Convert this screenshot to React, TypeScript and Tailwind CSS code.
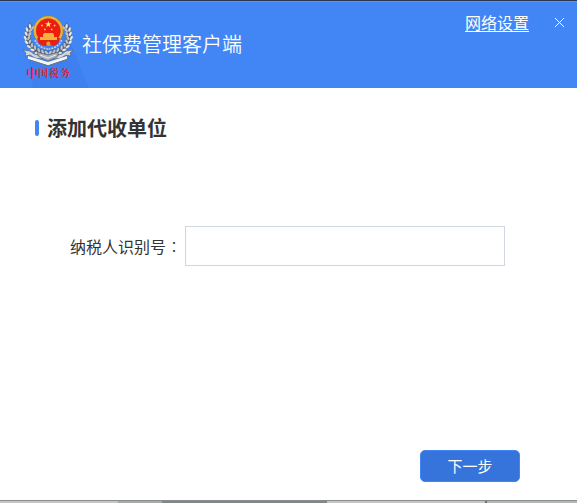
import { useState } from "react";

const fontStack = "font-['Noto_Sans_CJK_SC',sans-serif]";

// wheat ears on the left side, mirrored for the right one
const grains = [
  { x: 10, y: 11, r: 20 },
  { x: 7, y: 14, r: 14 },
  { x: 6, y: 18, r: 6 },
  { x: 5, y: 22, r: 0 },
  { x: 6, y: 26, r: -10 },
  { x: 8, y: 30, r: -25 },
  { x: 11, y: 33, r: -40 },
  { x: 15, y: 36, r: -55 },
  { x: 19, y: 38, r: -65 },
  { x: 23, y: 39, r: -75 },
];

function WheatEar() {
  return (
    <>
      <path
        d="M10 10C3 18 5 28 11 33s9 5 15 6"
        fill="none"
        stroke="#566075"
        strokeWidth="6"
      />
      {grains.map((g) => (
        <g key={g.y} transform={`translate(${g.x} ${g.y}) rotate(${g.r})`}>
          <ellipse cx="-2" cy="0" rx="1.2" ry="2.3" fill="#e4e7e8" transform="rotate(-30)" />
          <ellipse cx="2" cy="0" rx="1.2" ry="2.3" fill="#bcc2c6" transform="rotate(30)" />
        </g>
      ))}
      <path
        d="M13 25c2 5 6 8 13 9"
        fill="none"
        stroke="#c9ced0"
        strokeWidth="1.6"
        strokeDasharray="2 1"
      />
    </>
  );
}

function Emblem() {
  return (
    <svg className="h-[66px] w-[52px] shrink-0" viewBox="0 0 52 66" role="img">
      <WheatEar />
      <g transform="translate(52.6 0) scale(-1 1)">
        <WheatEar />
      </g>

      {/* ribbon ends and the book under the wheat */}
      <path d="M1 35l7 1 4 3 7 2 1 3-7-1-5-3-5 1 1-3z" fill="#d3d7d9" stroke="#4f5b6e" strokeWidth=".6" />
      <path d="M51 35l-7 1-4 3-7 2-1 3 7-1 5-3 5 1-1-3z" fill="#d3d7d9" stroke="#4f5b6e" strokeWidth=".6" />
      <path d="M15 37l11 3 11-3-2 5-9 4-9-4z" fill="#aab1b7" stroke="#4f5b6e" strokeWidth=".6" />
      <path d="M18 40l8 3 8-3" fill="none" stroke="#eceeee" strokeWidth="1" />
      <path d="M6 41l20 6 19-6v3l-18 6h-2L6 44z" fill="#f4f5f5" />
      <path d="M6 44l19 6h2l18-6v1l-18 6h-2L7 45z" fill="#6d7275" />

      {/* national emblem */}
      <circle cx="26.3" cy="15.8" r="15" fill="#b68a2c" />
      <circle cx="26.3" cy="15.8" r="13.4" fill="none" stroke="#dcb548" strokeWidth="2.2" />
      <circle cx="26.3" cy="15.8" r="12.2" fill="#f01c10" />
      <path d="M15 23h23l-2 6-5 2-4-2-4 2-6-2z" fill="#e52014" />
      <path d="M26.3 6l.8 2.3h2.5l-2 1.5.8 2.4-2.1-1.5-2.1 1.5.8-2.4-2-1.5h2.5z" fill="#ffe87a" />
      <g fill="#ffcf55">
        <circle cx="20" cy="10.5" r=".9" />
        <circle cx="32.6" cy="10.5" r=".9" />
        <circle cx="22.9" cy="14.4" r=".9" />
        <circle cx="29.7" cy="14.4" r=".9" />
      </g>
      <path d="M22 18h9l1 2v2h3v3H18v-3h3v-2z" fill="#efb53a" />
      <circle cx="26.3" cy="28.4" r="2" fill="#e0a52c" />

      <g
        fill="#e01c24"
        fontFamily="'Noto Serif CJK SC','Noto Sans CJK SC',serif"
        fontWeight="700"
      >
        <text x="4" y="63" fontSize="12">中</text>
        <text x="16" y="62" fontSize="10">国</text>
        <text x="27" y="62" fontSize="10">税</text>
        <text x="38" y="62" fontSize="10">务</text>
      </g>
    </svg>
  );
}

function Header() {
  return (
    <header className="border-t border-[#263653]">
      <div className="relative flex h-[87px] justify-between border-t border-[#8291ae] bg-[#4285f4] pt-[13px] pl-[22px] text-white">
        <svg className="absolute bottom-0 left-7 h-14 w-16" viewBox="0 0 64 56" aria-hidden="true">
          <path d="M5 56L0 24 38 0l23 56z" fill="#3f80f0" />
        </svg>
        <div className="relative flex">
          <Emblem />
          <h1 className="ml-2 pt-[15px] text-[20px] leading-7 font-[350]">社保费管理客户端</h1>
        </div>
        <div className="-mt-[3px] flex h-5 items-center gap-[25px] pr-3">
          <a href="#network" className="text-base leading-5 underline underline-offset-2">
            网络设置
          </a>
          <button type="button" aria-label="关闭" className="h-[11px] w-[11px]">
            <svg viewBox="0 0 11 11" className="h-[11px] w-[11px]">
              <path d="M1 1l9 9M10 1l-9 9" stroke="#fff" strokeWidth="1" />
            </svg>
          </button>
        </div>
      </div>
    </header>
  );
}

export default function App() {
  const [taxNo, setTaxNo] = useState("");

  return (
    <div className={`flex min-h-screen flex-col bg-white text-[#333] ${fontStack}`}>
      <Header />

      <form
        className="flex flex-1 flex-col"
        onSubmit={(e) => e.preventDefault()}
      >
        <div className="flex items-center gap-2 px-[35px] pt-7">
          <span className="h-4 w-1 rounded-full bg-[#4285f4]" />
          <h2 className="text-[20px] leading-6 font-bold">添加代收单位</h2>
        </div>

        <div className="mt-[86px] flex items-center gap-[3px] pr-[72px] pl-[70px]">
          <label htmlFor="taxNo" className="text-base leading-6 whitespace-nowrap">
            纳税人识别号
            <span className="font-['Noto_Sans_CJK_TC',sans-serif] font-light" lang="zh-TW">：</span>
          </label>
          <input
            id="taxNo"
            type="text"
            value={taxNo}
            onChange={(e) => setTaxNo(e.target.value)}
            className="h-10 min-w-0 flex-1 border border-[#d0d7e0] px-2 text-base outline-none"
          />
        </div>

        <div className="mt-auto flex justify-end pr-[57px] pb-[18px]">
          <button
            type="submit"
            className="h-8 w-[100px] rounded-[5px] border border-[#4285f4] bg-[#3674dc] text-[15px] leading-5 text-white"
          >
            下一步
          </button>
        </div>
      </form>

      {/* window edge */}
      <div className="flex h-[3px] border-t border-[#8a8f8e]">
        <div className="w-[118px] bg-[#c3c6c3]" />
        <div className="w-[44px] bg-[#a5abad]" />
        <div className="w-[165px] bg-[#7d878c]" />
        <div className="flex-1 bg-[#c3c6c3]" />
        <div className="w-[2px] bg-[#6c7070]" />
        <div className="w-[90px] bg-[#b3b7b1]" />
      </div>
    </div>
  );
}
